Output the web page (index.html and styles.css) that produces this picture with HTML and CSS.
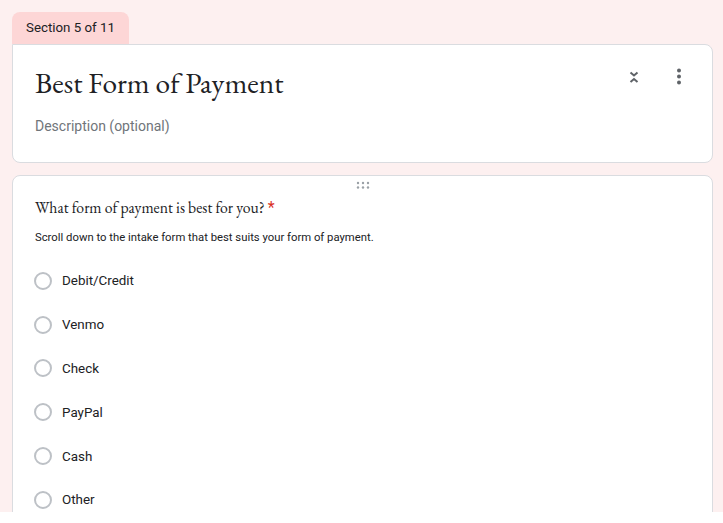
FILE: index.html
```html
<!DOCTYPE html>
<html lang="en">
<head>
    <meta charset="UTF-8">
    <title>Best Form of Payment</title>
    <link rel="stylesheet" href="styles.css">
</head>
<body>
    <div class="page">
        <div class="section-tab">Section 5 of 11</div>

        <div class="card header-card">
            <div class="header-top">
                <h1 class="section-title">Best Form of Payment</h1>
                <div class="header-actions">
                    <svg class="icon" width="24" height="24" viewBox="0 0 24 24">
                        <polyline points="8.5,7.5 12,10.5 15.5,7.5" fill="none" stroke="#5f6368" stroke-width="2"/>
                        <polyline points="8.5,17 12,14 15.5,17" fill="none" stroke="#5f6368" stroke-width="2"/>
                    </svg>
                    <svg class="icon" width="24" height="24" viewBox="0 0 24 24">
                        <circle cx="12" cy="5.5" r="2" fill="#5f6368"/>
                        <circle cx="12" cy="11.5" r="2" fill="#5f6368"/>
                        <circle cx="12" cy="17.5" r="2" fill="#5f6368"/>
                    </svg>
                </div>
            </div>
            <div class="section-desc">Description (optional)</div>
        </div>

        <div class="card question-card">
            <div class="drag-handle">
                <svg width="14" height="8" viewBox="0 0 14 8">
                    <circle cx="2" cy="2" r="1.2" fill="#9aa0a6"/>
                    <circle cx="7" cy="2" r="1.2" fill="#9aa0a6"/>
                    <circle cx="12" cy="2" r="1.2" fill="#9aa0a6"/>
                    <circle cx="2" cy="6.5" r="1.2" fill="#9aa0a6"/>
                    <circle cx="7" cy="6.5" r="1.2" fill="#9aa0a6"/>
                    <circle cx="12" cy="6.5" r="1.2" fill="#9aa0a6"/>
                </svg>
            </div>
            <div class="question-title">What form of payment is best for you? <span class="required">*</span></div>
            <div class="question-help">Scroll down to the intake form that best suits your form of payment.</div>

            <div class="options">
                <div class="option"><span class="radio"></span><span>Debit/Credit</span></div>
                <div class="option"><span class="radio"></span><span>Venmo</span></div>
                <div class="option"><span class="radio"></span><span>Check</span></div>
                <div class="option"><span class="radio"></span><span>PayPal</span></div>
                <div class="option"><span class="radio"></span><span>Cash</span></div>
                <div class="option"><span class="radio"></span><span>Other</span></div>
            </div>
        </div>
    </div>
</body>
</html>
```

FILE: styles.css
```css
* {
    margin: 0;
    padding: 0;
    box-sizing: border-box;
}

body {
    background-color: white;
    font-family: Roboto, 'Liberation Sans', Arial, sans-serif;
    color: #202124;
}

.page {
    height: 512px;
    overflow: hidden;
    background-color: #fdf0f0;
    padding: 12px 10px 0 12px;
}

.section-tab {
    display: inline-block;
    background-color: #fdd6d6;
    border-radius: 8px 8px 0 0;
    padding: 0 14px;
    height: 32px;
    line-height: 31px;
    font-size: 13.3px;
    color: #202124;
}

.card {
    background-color: white;
    border: 1px solid #dadce0;
    border-radius: 8px;
}

.header-card {
    border-top-left-radius: 0;
    height: 119px;
    padding: 17px 22px 0 22px;
}

.header-top {
    display: flex;
    justify-content: space-between;
    align-items: flex-start;
}

.section-title {
    font-family: 'EB Garamond', 'Liberation Serif', 'Times New Roman', serif;
    font-weight: 400;
    font-size: 29.4px;
    line-height: 42px;
    color: #202124;
}

.header-actions {
    display: flex;
    gap: 21px;
    padding-top: 3px;
    margin-right: -1px;
}

.icon {
    display: block;
}

.section-desc {
    margin-top: 14px;
    font-size: 14px;
    color: #70757a;
}

.question-card {
    margin-top: 12px;
    height: 400px;
    padding: 0 22px;
}

.drag-handle {
    display: flex;
    justify-content: center;
    padding-top: 5px;
    height: 20px;
}

.question-title {
    font-family: 'EB Garamond', 'Liberation Serif', 'Times New Roman', serif;
    font-size: 15.7px;
    line-height: 24px;
    color: #202124;
}

.required {
    font-family: Roboto, 'Liberation Sans', Arial, sans-serif;
    font-size: 16px;
    color: #d93025;
}

.question-help {
    margin-top: 10px;
    font-size: 11.3px;
    line-height: 16px;
    color: #202124;
}

.options {
    margin-top: 13px;
    display: flex;
    flex-direction: column;
}

.option {
    display: flex;
    align-items: center;
    gap: 10px;
    height: 43.8px;
    font-size: 13.4px;
    color: #202124;
}

.radio {
    width: 18px;
    height: 18px;
    margin-left: -1px;
    border: 2px solid #bdc1c6;
    border-radius: 50%;
    flex-shrink: 0;
}
```
